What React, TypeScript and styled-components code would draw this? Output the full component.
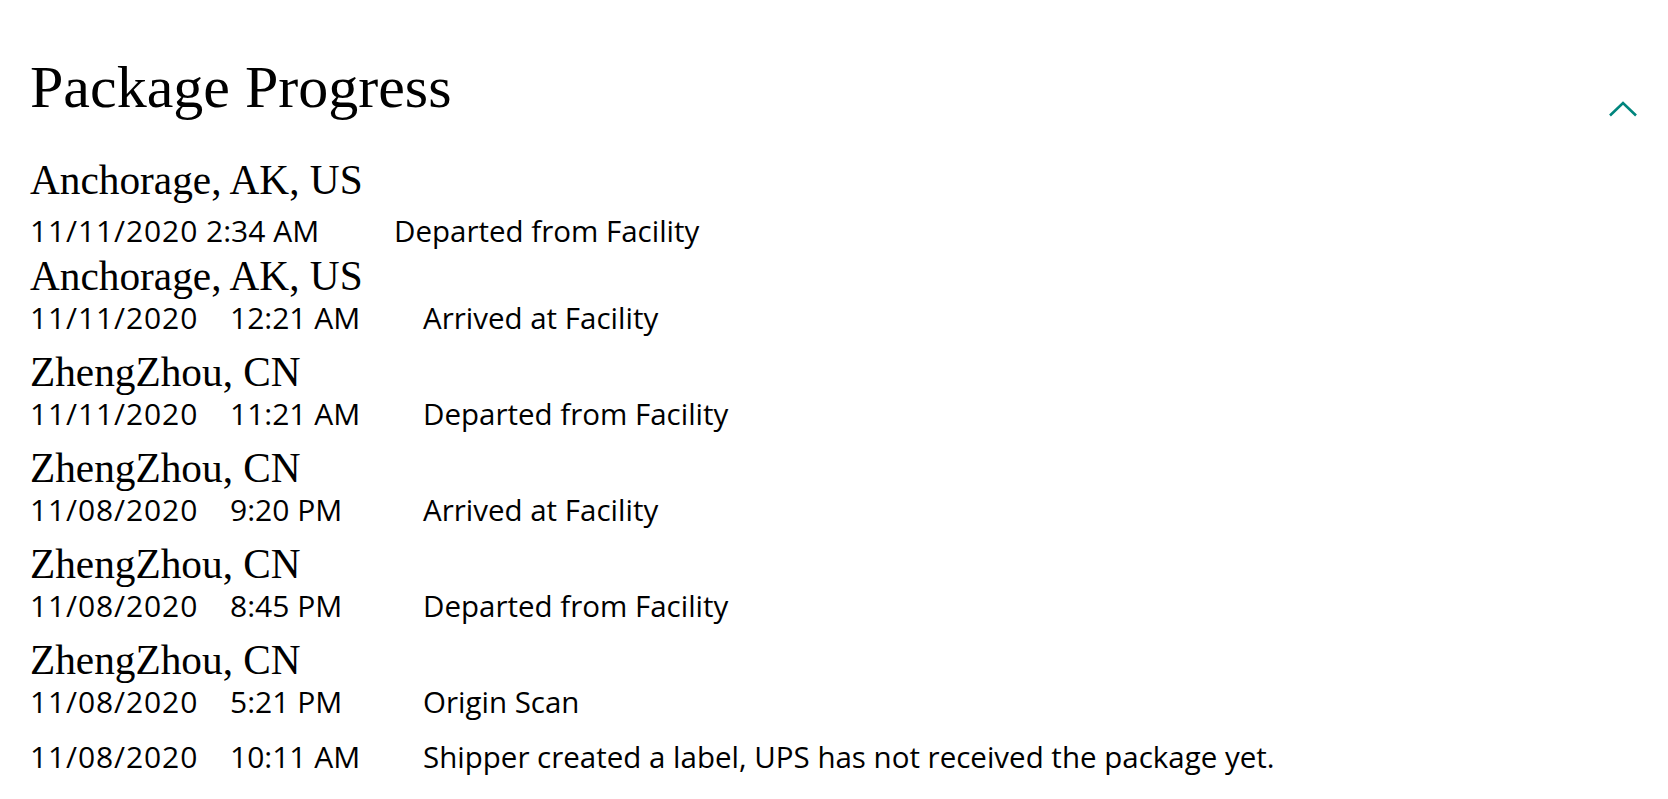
import styled, { createGlobalStyle } from "styled-components";

const GlobalStyle = createGlobalStyle`
  html,
  body {
    margin: 0;
    background: #fff;
  }
`;

const Page = styled.main`
  padding: 54px 30px 0 30px;
  font-family: "Open Sans", "Noto Sans", sans-serif;
  color: #000;
`;

const Header = styled.div`
  display: flex;
  justify-content: space-between;
  align-items: flex-end;
`;

const Title = styled.h2`
  margin: 0;
  font-family: "Liberation Serif", serif;
  font-weight: 400;
  font-size: 60px;
  line-height: 66px;
`;

const CollapseButton = styled.button`
  display: flex;
  padding: 0;
  margin: 0 0 3px 0;
  border: 0;
  background: none;
  color: #00857d;
  cursor: pointer;
`;

const ActivityList = styled.ol`
  list-style: none;
  margin: 40px 0 0 0;
  padding: 0;
`;

const Activity = styled.li<{ $lead?: boolean }>`
  padding-bottom: ${(props) => (props.$lead ? 7 : 16)}px;
`;

const Location = styled.h3`
  margin: 0;
  font-family: "Liberation Serif", serif;
  font-weight: 400;
  font-size: 41.3px;
  line-height: 41px;
`;

const Detail = styled.div<{ $lead?: boolean }>`
  display: grid;
  grid-template-columns: ${(props) =>
    props.$lead ? "364px 1fr" : "200px 193px 1fr"};
  margin-top: ${(props) => (props.$lead ? 11 : 2)}px;
  font-size: 30px;
  line-height: 37px;
  white-space: nowrap;
`;

const ScanDate = styled.span`
  letter-spacing: 0.9px;
`;

const ScanTime = styled.span``;

const Description = styled.span`
  font-size: 29.5px;
`;

type Scan = {
  location?: string;
  date: string;
  time: string;
  activity: string;
};

const scans: Scan[] = [
  {
    location: "Anchorage, AK, US",
    date: "11/11/2020",
    time: "2:34 AM",
    activity: "Departed from Facility",
  },
  {
    location: "Anchorage, AK, US",
    date: "11/11/2020",
    time: "12:21 AM",
    activity: "Arrived at Facility",
  },
  {
    location: "ZhengZhou, CN",
    date: "11/11/2020",
    time: "11:21 AM",
    activity: "Departed from Facility",
  },
  {
    location: "ZhengZhou, CN",
    date: "11/08/2020",
    time: "9:20 PM",
    activity: "Arrived at Facility",
  },
  {
    location: "ZhengZhou, CN",
    date: "11/08/2020",
    time: "8:45 PM",
    activity: "Departed from Facility",
  },
  {
    location: "ZhengZhou, CN",
    date: "11/08/2020",
    time: "5:21 PM",
    activity: "Origin Scan",
  },
  {
    date: "11/08/2020",
    time: "10:11 AM",
    activity: "Shipper created a label, UPS has not received the package yet.",
  },
];

const App = () => {
  return (
    <>
      <GlobalStyle />
      <Page>
        <Header>
          <Title>Package Progress</Title>
          <CollapseButton aria-label="Collapse package progress">
            <svg width="30" height="16" viewBox="0 0 30 16" fill="none">
              <path
                d="M2 14.5 15 2l13 12.5"
                stroke="currentColor"
                strokeWidth="2.6"
              />
            </svg>
          </CollapseButton>
        </Header>
        <ActivityList>
          {scans.map((scan, i) => {
            // most recent scan shows date and time together
            const lead = i === 0;
            return (
              <Activity key={i} $lead={lead}>
                {scan.location && <Location>{scan.location}</Location>}
                <Detail $lead={lead}>
                  {lead ? (
                    <span>
                      <ScanDate>{scan.date}</ScanDate> {scan.time}
                    </span>
                  ) : (
                    <>
                      <ScanDate>{scan.date}</ScanDate>
                      <ScanTime>{scan.time}</ScanTime>
                    </>
                  )}
                  <Description>{scan.activity}</Description>
                </Detail>
              </Activity>
            );
          })}
        </ActivityList>
      </Page>
    </>
  );
};

export default App;
